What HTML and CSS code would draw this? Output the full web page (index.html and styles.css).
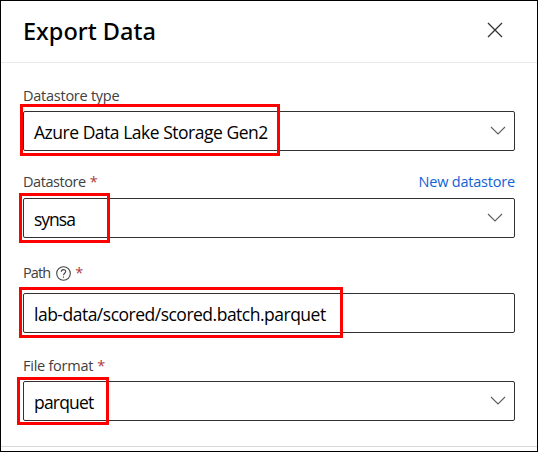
FILE: index.html
```
<!DOCTYPE html>
<html lang="en">
<head>
<meta charset="utf-8">
<title>Export Data</title>
<link rel="stylesheet" href="styles.css">
</head>
<body>
<main class="panel">
  <header class="header">
    <h1 class="title">Export Data</h1>
    <svg class="close" width="16" height="16" viewBox="0 0 16 16"><path d="M1 1L15 15M15 1L1 15"/></svg>
  </header>
  <form class="form">
    <section class="group type">
      <div class="label"><span class="t-type">Datastore type</span></div>
      <div class="control">
        <div class="field"><span class="value v-type">Azure Data Lake Storage Gen2</span><svg class="chevron" width="16" height="9" viewBox="0 0 16 9"><path d="M1 1L8 8L15 1"/></svg></div>
        <i class="mark mark-type"></i>
      </div>
    </section>
    <section class="group store">
      <div class="label"><span class="t-store">Datastore</span><span class="req">*</span><a class="link">New datastore</a></div>
      <div class="control">
        <div class="field inset"><span class="value v-store">synsa</span><svg class="chevron" width="16" height="9" viewBox="0 0 16 9"><path d="M1 1L8 8L15 1"/></svg></div>
        <i class="mark mark-store"></i>
      </div>
    </section>
    <section class="group path">
      <div class="label"><span class="t-path">Path</span><svg class="help" width="15" height="15" viewBox="0 0 15 15"><circle cx="7.5" cy="7.5" r="6.8"/><path d="M5.3 5.8C5.3 2.9 9.8 3 9.7 5.6C9.7 7.2 7.5 7.3 7.5 9.3M7.5 10.6V11.8"/></svg><span class="req">*</span></div>
      <div class="control">
        <div class="field"><span class="value v-path">lab-data/scored/scored.batch.parquet</span></div>
        <i class="mark mark-path"></i>
      </div>
    </section>
    <section class="group format">
      <div class="label"><span class="t-format">File format</span><span class="req">*</span></div>
      <div class="control">
        <div class="field"><span class="value v-format">parquet</span><svg class="chevron" width="16" height="9" viewBox="0 0 16 9"><path d="M1 1L8 8L15 1"/></svg></div>
        <i class="mark mark-format"></i>
      </div>
    </section>
  </form>
</main>
</body>
</html>
```
FILE: styles.css
```
* { box-sizing: border-box; }
body { margin: 0; background: #fff; font-family: "Open Sans", "Noto Sans", sans-serif; }
.panel { width: 538px; height: 452px; border: 1px solid #000; display: flex; flex-direction: column; }
.header { height: 62px; flex: none; display: flex; align-items: center; justify-content: space-between; padding: 0 34px 2px 22px; border-bottom: 1px solid #e9e9e9; }
.title { margin: 0; font-family: "Noto Sans", sans-serif; font-size: 23.5px; font-weight: 500; line-height: 32px; color: #000; white-space: nowrap; }
svg { flex: none; fill: none; }
.close { stroke: #333; stroke-width: 1.3; margin-top: -1px; }
.form { height: 384px; padding: 22px 22px 0; border-bottom: 1px solid #d8d8d8; }
.group { display: flex; flex-direction: column; }
.store { margin-top: 20px; }
.path { margin-top: 24px; }
.format { margin-top: 22px; }
.label { height: 26px; display: flex; align-items: center; font-size: 14.5px; line-height: 22px; color: #404040; white-space: nowrap; }
.type .label { padding-bottom: 4px; }
.store .label { height: 27px; padding-bottom: 5px; }
.path .label { height: 31px; padding-bottom: 9px; }
.format .label { padding-bottom: 4px; }
.t-type { letter-spacing: -0.25px; }
.t-store { letter-spacing: -0.45px; }
.t-path { letter-spacing: -0.9px; }
.t-format { letter-spacing: -0.25px; }
.req { color: #b0393e; margin-left: 4px; }
.help { margin-left: 6px; stroke: #444; stroke-width: 1.1; }
.link { margin-left: auto; color: #1062d6; letter-spacing: -0.2px; }
.control { position: relative; }
.field { height: 40px; display: flex; align-items: center; justify-content: space-between; border: 1px solid #323130; border-radius: 2px; padding: 1px 8px 0 10px; }
.inset { padding-right: 11px; }
.value { font-size: 17.5px; line-height: 26px; color: #000; white-space: nowrap; letter-spacing: -0.5px; }
.v-type { letter-spacing: -0.48px; }
.v-store { letter-spacing: -1px; }
.v-format { letter-spacing: -0.8px; }
.chevron { stroke: #605e5c; stroke-width: 1.1; margin-bottom: 2px; }
.mark { position: absolute; border: 3px solid #f00; }
.mark-type { left: -3px; top: -7px; width: 260px; height: 52px; }
.mark-store { left: -4px; top: -5px; width: 91px; height: 50px; }
.mark-path { left: -4px; top: -6px; width: 324px; height: 51px; }
.mark-format { left: -6px; top: -4px; width: 92px; height: 48px; }
```
